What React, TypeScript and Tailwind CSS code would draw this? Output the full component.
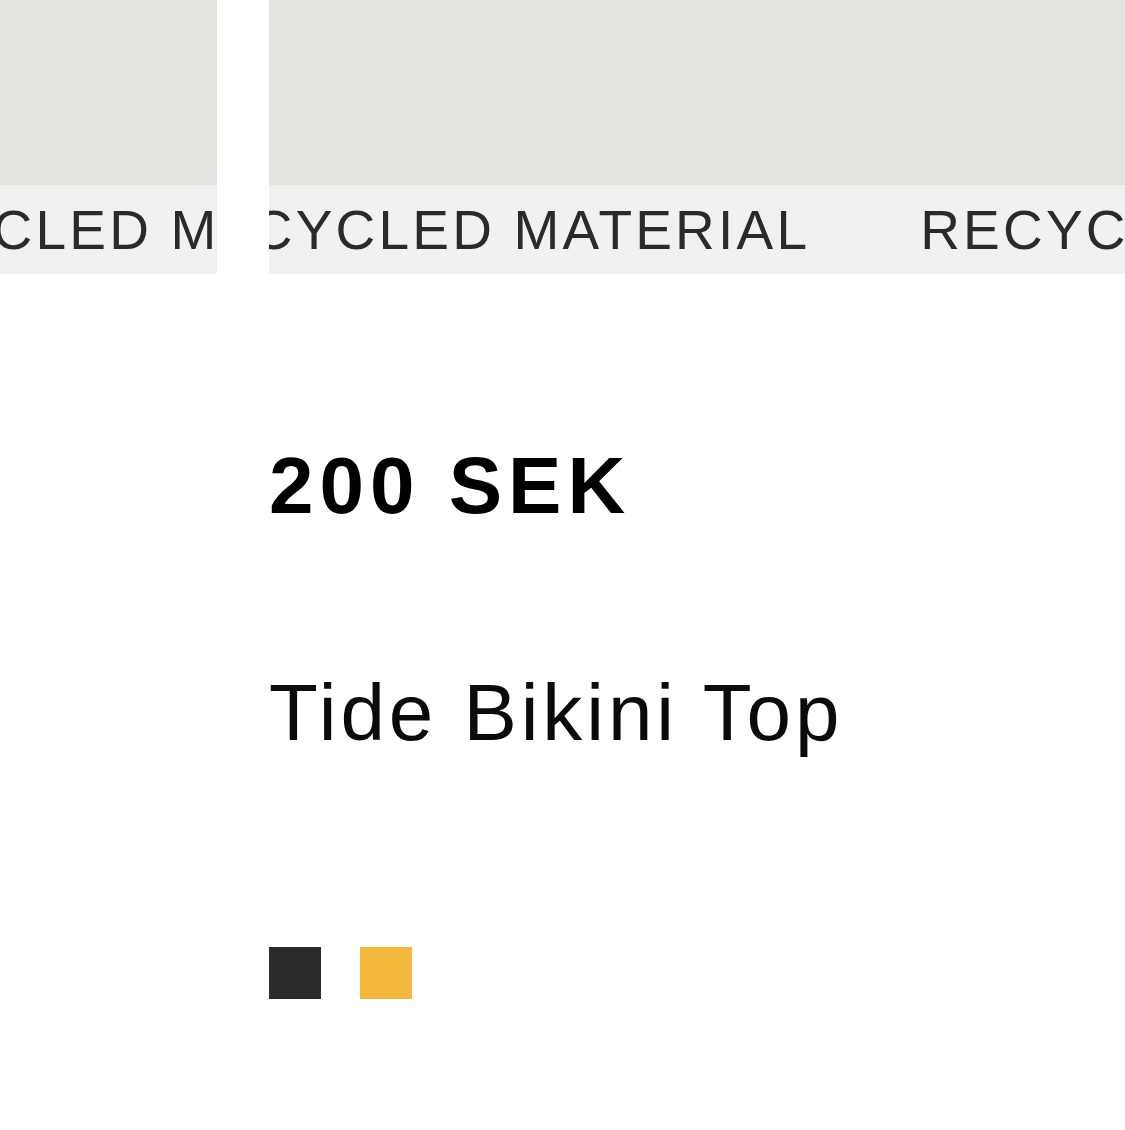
export default function App() {
  const Marquee = ({ shift }: { shift: string }) => (
    <div className="h-[89px] bg-[#f1f1f1] overflow-hidden pt-[18px]">
      <div className={`flex whitespace-nowrap ${shift}`}>
        {[0, 1, 2, 3].map((i) => (
          <span
            key={i}
            className="shrink-0 pr-[110px] text-[55px] leading-none tracking-[3.2px] text-[#2a2a2a]"
          >
            RECYCLED MATERIAL
          </span>
        ))}
      </div>
    </div>
  );

  return (
    <div className="min-h-[1130px] w-full overflow-hidden bg-white font-['Liberation_Sans',Arial,sans-serif]">
      <div className="flex gap-[52px]">
        <div className="w-[217px] shrink-0">
          <div className="h-[185px] bg-[#e3e3df]" />
          <Marquee shift="ml-[-173px]" />
        </div>
        <div className="flex-1 min-w-0">
          <div className="h-[185px] bg-[#e3e3df]" />
          <Marquee shift="ml-[-99px]" />
          <div className="pt-[172px]">
            <div className="text-[80px] font-bold leading-none tracking-[6px] text-black">
              200 SEK
            </div>
            <div className="mt-[147px] text-[80px] leading-none tracking-[3.9px] text-[#0a0a0a]">
              Tide Bikini Top
            </div>
            <div className="mt-[194px] flex gap-[39px]">
              <div className="h-[52px] w-[52px] bg-[#2b2b2e]" />
              <div className="h-[52px] w-[52px] bg-[#f4b73e]" />
            </div>
          </div>
        </div>
      </div>
    </div>
  );
}
